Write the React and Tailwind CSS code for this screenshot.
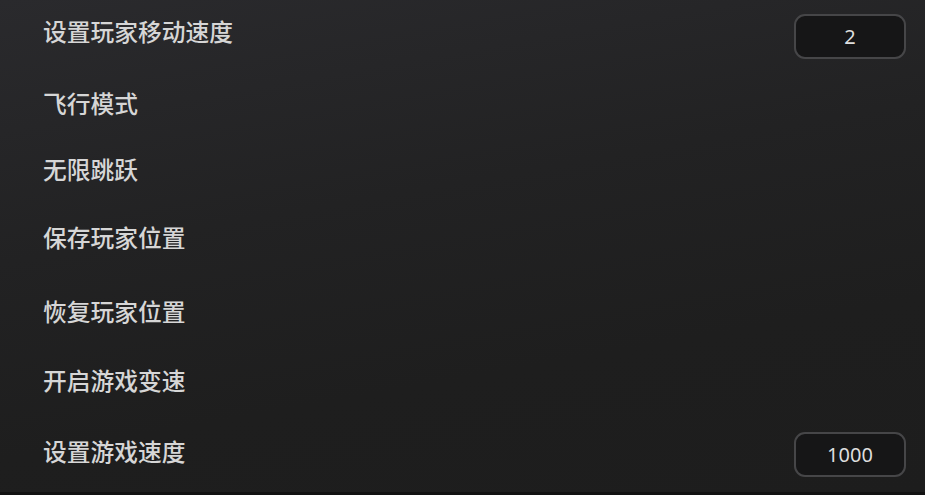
export default function App() {
  const rows = [
    { label: '设置玩家移动速度', value: '2', mt: 'mt-0', nudge: 'mb-[11px]' },
    { label: '飞行模式', mt: 'mt-[24px]', nudge: 'mb-[5px]' },
    { label: '无限跳跃', mt: 'mt-[21px]', nudge: 'mb-[5px]' },
    { label: '保存玩家位置', mt: 'mt-[23px]', nudge: 'mb-[5px]' },
    { label: '恢复玩家位置', mt: 'mt-[29px]', nudge: 'mb-[5px]' },
    { label: '开启游戏变速', mt: 'mt-[24px]', nudge: 'mb-[5px]' },
    { label: '设置游戏速度', value: '1000', mt: 'mt-[27px]', nudge: 'mb-[7px]' },
  ];

  return (
    <div className="w-[925px] h-[495px] overflow-hidden flex flex-col bg-[linear-gradient(170deg,#2a2a2d_0%,#222223_40%,#1e1e1e_70%,#1d1d1d_100%)] font-['Noto_Sans','Noto_Sans_CJK_SC',sans-serif]">
      <div className="flex-1 flex flex-col pt-[14px] pl-[43px] pr-[19px]">
        {rows.map((row) => (
          <div key={row.label} className={`${row.mt} h-[45px] flex items-center justify-between`}>
            <span className={`${row.nudge} text-[23.75px] leading-none font-medium text-[#d6d6d6] font-['Noto_Sans_CJK_SC',sans-serif]`}>
              {row.label}
            </span>
            {row.value && (
              <div className="w-[112px] h-[45px] rounded-[11px] border-2 border-[#464648] bg-[#161617] flex items-center justify-center text-[20px] text-[#dedede]">
                {row.value}
              </div>
            )}
          </div>
        ))}
      </div>
      <div className="h-[3px] bg-[#121212]" />
    </div>
  );
}
